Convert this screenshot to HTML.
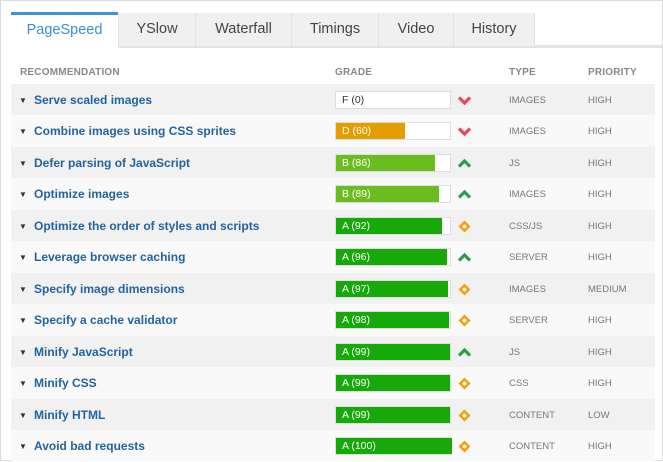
<!DOCTYPE html>
<html><head><style>
body{margin:0;width:663px;height:461px;background:#fff;font-family:"Liberation Sans",sans-serif;position:relative;overflow:hidden}
.frame{position:absolute;left:0;top:0;width:661px;height:459px;border:1px solid #dcdcdc}
.tab{position:absolute;top:13px;height:33px;line-height:33px;text-align:center;font-size:14.5px;color:#444;background:#f0f0f0;border-left:1px solid #e2e2e2;box-sizing:border-box}
.bar{position:absolute;top:45px;left:118px;width:544px;height:3px;background:#e3e3e3}
.act{position:absolute;left:11px;top:12px;width:107px;height:36px;background:#fff;border-top:3px solid #3a93db;box-sizing:border-box;text-align:center;line-height:31px;color:#3a8fd6;font-size:14.5px}
.h{position:absolute;top:67px;font-size:10px;color:#888;font-weight:bold;letter-spacing:.2px}
.row{position:absolute;left:11px;width:644px;height:31.5px}
.row span{position:absolute;top:1px;line-height:31px}
.tri{left:8px;font-size:8px;color:#333}
.rec{left:23px;font-size:12px;font-weight:bold;color:#22649e}
.g{position:absolute;left:324px;top:7px;width:116px;height:18px;background:#fff;border:1px solid #ddd;box-sizing:border-box}
.g i{position:absolute;left:0;top:0;bottom:0}
.g b{position:absolute;left:6px;top:0;line-height:16px;font-size:10.5px;font-weight:normal;color:#fff}
.t{left:498px;font-size:9.5px;color:#777}
.p{left:577px;font-size:9.5px;color:#777}
.ic{position:absolute;left:446px;top:9px;width:15px;height:15px}
</style></head><body>
<div class="frame"></div>
<div class="bar"></div>
<div class="tab" style="left:118px;width:77px">YSlow</div>
<div class="tab" style="left:195px;width:96px">Waterfall</div>
<div class="tab" style="left:291px;width:87px">Timings</div>
<div class="tab" style="left:378px;width:75px">Video</div>
<div class="tab" style="left:453px;width:82px;border-right:1px solid #e2e2e2">History</div>
<div class="act">PageSpeed</div>
<div class="h" style="left:20px">RECOMMENDATION</div>
<div class="h" style="left:335px">GRADE</div>
<div class="h" style="left:509px">TYPE</div>
<div class="h" style="left:588px">PRIORITY</div>
<div id="rows"></div>
<script>
var d=[["Serve scaled images","F (0)",0,"#fff","d","IMAGES","HIGH"],
["Combine images using CSS sprites","D (60)",69,"#e59e00","d","IMAGES","HIGH"],
["Defer parsing of JavaScript","B (86)",99,"#6bbd1f","u","JS","HIGH"],
["Optimize images","B (89)",103,"#6bbd1f","u","IMAGES","HIGH"],
["Optimize the order of styles and scripts","A (92)",106,"#17a90a","o","CSS/JS","HIGH"],
["Leverage browser caching","A (96)",111,"#17a90a","u","SERVER","HIGH"],
["Specify image dimensions","A (97)",112,"#17a90a","o","IMAGES","MEDIUM"],
["Specify a cache validator","A (98)",113,"#17a90a","o","SERVER","HIGH"],
["Minify JavaScript","A (99)",114,"#17a90a","u","JS","HIGH"],
["Minify CSS","A (99)",114,"#17a90a","o","CSS","HIGH"],
["Minify HTML","A (99)",114,"#17a90a","o","CONTENT","LOW"],
["Avoid bad requests","A (100)",116,"#17a90a","o","CONTENT","HIGH"]];
var ic={d:'<path d="M2 4.5L7.5 10L13 4.5" stroke="#e8485a" stroke-width="3.2" fill="none"/>',
u:'<path d="M2 10.5L7.5 5L13 10.5" stroke="#2ba04a" stroke-width="3.2" fill="none"/>',
o:'<path d="M7.5 1.5L13.5 7.5L7.5 13.5L1.5 7.5Z" fill="#f5a00f"/><circle cx="7.5" cy="7.5" r="1.9" fill="#fff"/>'};
var h='';
d.forEach(function(r,i){
h+='<div class="row" style="top:'+(84+i*31.45)+'px;background:'+(i%2?'#f9f9f9':'#f1f1f1')+'">'+
'<span class="tri">&#9660;</span><span class="rec">'+r[0]+'</span>'+
'<div class="g"><i style="width:'+r[2]+'px;background:'+r[3]+'"></i><b style="color:'+(r[2]?'#fff':'#333')+'">'+r[1]+'</b></div>'+
'<svg class="ic" viewBox="0 0 15 15">'+ic[r[4]]+'</svg>'+
'<span class="t">'+r[5]+'</span><span class="p">'+r[6]+'</span></div>';});
document.getElementById('rows').innerHTML=h;
</script>
</body></html>
